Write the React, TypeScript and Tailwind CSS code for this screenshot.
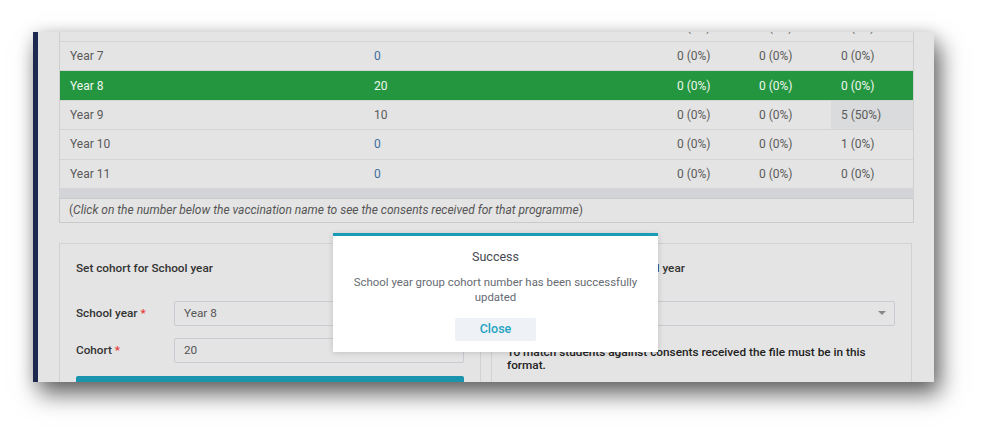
import React from 'react';

type Row = {
    year: string;
    count: string;
    countColor: string;
    a: string;
    b: string;
    c: string;
    active?: boolean;
    hiC?: boolean;
};

const rows: Row[] = [
    { year: 'Year 7', count: '0', countColor: 'text-[#3d6d9c]', a: '0 (0%)', b: '0 (0%)', c: '0 (0%)' },
    { year: 'Year 8', count: '20', countColor: 'text-[#eef7ef]', a: '0 (0%)', b: '0 (0%)', c: '0 (0%)', active: true },
    { year: 'Year 9', count: '10', countColor: 'text-[#5a5a5a]', a: '0 (0%)', b: '0 (0%)', c: '5 (50%)', hiC: true },
    { year: 'Year 10', count: '0', countColor: 'text-[#3d6d9c]', a: '0 (0%)', b: '0 (0%)', c: '1 (0%)' },
    { year: 'Year 11', count: '0', countColor: 'text-[#3d6d9c]', a: '0 (0%)', b: '0 (0%)', c: '0 (0%)' },
];

const cols = 'grid grid-cols-[304px_303px_82px_82px_82px]';

const TableRow: React.FC<{ row: Row }> = ({ row }) => {
    const base = row.active ? 'bg-[#259640] text-[#eef7ef]' : 'text-[#5a5a5a]';
    return (
        <div className={`${cols} h-[29.4px] border-b border-[#d4d4d4] text-[12px] ${base}`}>
            <div className="flex items-center pl-[10px]">{row.year}</div>
            <div className={`flex items-center pl-[10px] ${row.countColor}`}>{row.count}</div>
            <div className="flex items-center pl-[10px]">{row.a}</div>
            <div className="flex items-center pl-[10px]">{row.b}</div>
            <div className={`flex items-center pl-[10px] ${row.hiC ? 'bg-[#dadbdd]' : ''}`}>{row.c}</div>
        </div>
    );
};

export default function App() {
    return (
        <div className="w-[996px] h-[444px] bg-white pt-[32px] pl-[33px] font-['Roboto',sans-serif]">
            <div className="relative w-[901px] h-[350px] overflow-hidden flex shadow-[6px_12px_22px_rgba(0,0,0,0.6),0_0_14px_rgba(0,0,0,0.12)]">
                <div className="w-[5px] bg-[#1b2a4e] shrink-0" />
                <div className="flex-1 bg-[#e4e4e4] pl-[21px] pr-[22px]">
                    {/* Table */}
                    <div className="-mt-[19px] border-l border-r border-[#cfcfcf]">
                        <div className={`${cols} h-[29px] border-b border-[#d4d4d4] text-[12px] text-[#5a5a5a]`}>
                            <div />
                            <div />
                            <div className="flex items-center pl-[10px]">0 (0%)</div>
                            <div className="flex items-center pl-[10px]">0 (0%)</div>
                            <div className="flex items-center pl-[10px]">0 (0%)</div>
                        </div>
                        {rows.map((r) => (
                            <TableRow key={r.year} row={r} />
                        ))}
                    </div>
                    <div className="h-[9px] bg-[#d3d4d7]" />
                    <div className="h-[25px] border border-[#cacaca] flex items-center pl-[9px] text-[12px] text-[#555]">
                        (<span className="italic">Click on the number below the vaccination name to see the consents received for that programme</span>)
                    </div>

                    {/* Panels */}
                    <div className="mt-[20px] flex gap-[10px]">
                        <div className="w-[422px] border border-[#d2d2d2] px-[16px] pt-[16px] h-[200px]">
                            <div className="text-[11.75px] leading-[16px] font-medium text-[#333]">Set cohort for School year</div>
                            <div className="mt-[25px] flex items-center h-[25px]">
                                <div className="w-[98px] text-[11.75px] font-medium text-[#333]">
                                    School year <span className="text-[#e53935]">*</span>
                                </div>
                                <div className="flex-1 h-[25px] border border-[#c8ccd2] rounded-[2px] flex items-center pl-[9px] text-[11.75px] text-[#555]">
                                    Year 8
                                </div>
                            </div>
                            <div className="mt-[12px] flex items-center h-[25px]">
                                <div className="w-[98px] text-[11.75px] font-medium text-[#333]">
                                    Cohort <span className="text-[#e53935]">*</span>
                                </div>
                                <div className="flex-1 h-[25px] border border-[#c8ccd2] rounded-[2px] flex items-center pl-[9px] text-[11.75px] text-[#555]">
                                    20
                                </div>
                            </div>
                            <div className="mt-[13px] h-[30px] bg-[#1a93ad] rounded-[2px]" />
                        </div>
                        <div className="w-[421px] border border-[#d2d2d2] pl-[15px] pr-[16px] pt-[16px] h-[200px]">
                            <div className="text-[11.75px] leading-[16px] font-medium text-[#333]">Uploads Consents for School year</div>
                            <div className="mt-[25px] h-[25px] border border-[#c8ccd2] rounded-[2px] flex items-center justify-end pr-[8px]">
                                <svg width="8" height="5" viewBox="0 0 8 5">
                                    <path d="M0 0 L8 0 L4 4 Z" fill="#888" />
                                </svg>
                            </div>
                            <div className="mt-[20px] text-[11.8px] leading-[13px] font-medium text-[#222] pr-[4px]">
                                To match students against consents received the file must be in this format.
                            </div>
                        </div>
                    </div>
                </div>

                {/* Success modal */}
                <div className="absolute left-[300px] top-[201px] w-[325px] h-[119px] bg-white border-t-[3px] border-[#1a9bb5] shadow-[0_1px_6px_rgba(0,0,0,0.15)] flex flex-col items-center pt-[13px]">
                    <div className="text-[12.5px] leading-[16px] text-[#454a52]">Success</div>
                    <div className="mt-[10px] w-[295px] text-center text-[11.4px] leading-[15px] text-[#666b72]">
                        School year group cohort number has been successfully updated
                    </div>
                    <button className="mt-[13px] w-[81px] h-[23px] bg-[#eef1f5] rounded-[2px] text-[12.5px] font-medium text-[#25a3c3]">
                        Close
                    </button>
                </div>
            </div>
        </div>
    );
}
